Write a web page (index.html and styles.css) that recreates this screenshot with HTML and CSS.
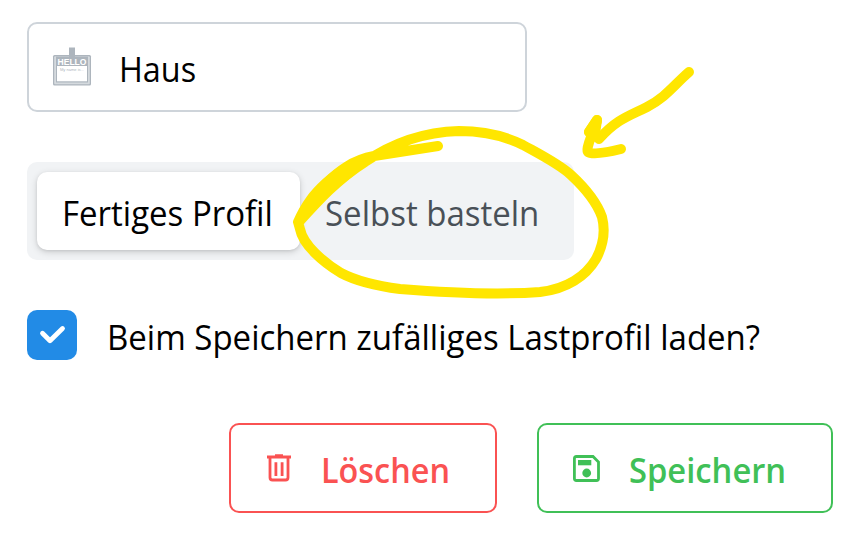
FILE: index.html
```html
<!DOCTYPE html>
<html lang="de">
<head>
<meta charset="utf-8">
<title>Lastprofil</title>
<link rel="stylesheet" href="styles.css">
</head>
<body>
<main class="form">
  <div class="field">
    <svg class="badge-icon" viewBox="0 0 40 40" aria-hidden="true">
      <rect x="1" y="8" width="38" height="30.5" rx="1.5" fill="#adb5bd"/>
      <rect x="2.2" y="9.2" width="35.6" height="28.1" rx="1" fill="#d5dade"/>
      <rect x="4" y="9.5" width="32" height="26" fill="#adb5bd"/>
      <rect x="5" y="19" width="30" height="15.3" fill="#fff"/>
      <rect x="17" y="0.5" width="6" height="10" fill="#adb5bd"/>
      <text class="hello" x="5.5" y="17.5" textLength="29" lengthAdjust="spacingAndGlyphs">HELLO</text>
      <text class="name-is" x="8" y="24" textLength="24" lengthAdjust="spacingAndGlyphs">My name is...</text>
    </svg>
    <span class="label label-haus">Haus</span>
  </div>
  <div class="segments">
    <div class="segment active"><span class="label label-fertig">Fertiges Profil</span></div>
    <div class="segment"><span class="label label-selbst">Selbst basteln</span></div>
  </div>
  <div class="check-row">
    <span class="checkbox">
      <svg viewBox="0 0 50 50" aria-hidden="true"><path d="M15.5 23.3 L23 30.7 L35.5 18.5"/></svg>
    </span>
    <span class="label label-check">Beim Speichern zufälliges Lastprofil laden?</span>
  </div>
  <div class="actions">
    <div class="button delete">
      <svg class="icon" viewBox="0 0 28 28" aria-hidden="true">
        <path d="M4 3.3V23.5Q4 26 6.5 26H19.5Q22 26 22 23.5V3.3M1 3H25M9 1.7H17M9.9 8.2V22M16.1 8.2V22"/>
      </svg>
      <span class="label label-delete">Löschen</span>
    </div>
    <div class="button save">
      <svg class="icon" viewBox="0 0 28 28" aria-hidden="true">
        <path d="M3.4 2.5H20L25.5 8V24.5Q25.5 26.5 23.5 26.5H3.4Q1.4 26.5 1.4 24.5V4.5Q1.4 2.5 3.4 2.5Z"/>
        <path class="solid" d="M5 6H18.3V11.3H5Z"/><circle class="solid" cx="13.7" cy="19" r="4.4"/>
      </svg>
      <span class="label label-save">Speichern</span>
    </div>
  </div>
</main>
<svg class="marker" viewBox="0 0 852 547" aria-hidden="true">
  <path d="M438 146L374 156C352 160 338 172 326 183C314 194 306 204 298 222L300 229C303 245 323 262 341 273C358 282 377 286 400 289C450 293 500 295 540 292C567 289 586 276 596 259C604 244 605 229 602 217C597 203 584 187 571 175C559 164 541 155 523 145C503 135 483 131 459 131C424 132 391 144 365 162C338 179 318 201 299 222"/>
  <path class="filled" d="M366 159C351 163 334 175 323 187L304 211L332 186Z"/>
  <path d="M689 72C673 86 666 97 647 107C629 116 617 119 599 139M597 120L589 132M597 121L591 137Q586 150 588 152Q593 156 621 149"/>
  <path class="filled" d="M597 120L589 132L595 134Z"/>
</svg>
</body>
</html>
```

FILE: styles.css
```css
* { box-sizing: border-box; }
body {
  margin: 0;
  background: #fff;
  color: #000;
  font: 35px/50px "Open Sans", "Noto Sans", sans-serif;
  overflow: hidden;
}
.form { width: 852px; height: 547px; padding: 22px 19px 0 27px; }
.label { display: inline-block; padding-top: 3px; white-space: nowrap; transform: scaleX(.943); transform-origin: 0 50%; flex: none; }
.label-haus { padding-top: 4px; transform: scaleX(.925); }
.label-delete { padding-top: 4px; transform: scaleX(.925); }
.label-save { padding-top: 4px; transform: scaleX(.935); }
.field {
  display: flex;
  align-items: center;
  width: 500px;
  height: 90px;
  padding-left: 23px;
  border: 2px solid #ced4da;
  border-radius: 10px;
}
.badge-icon { width: 40px; height: 40px; flex: none; margin-right: 27px; }
.hello { font: bold 9px "Liberation Sans", sans-serif; fill: #fff; }
.name-is { font: 4px "Liberation Sans", sans-serif; fill: #adb5bd; }
.segments {
  display: flex;
  width: 547px;
  height: 98px;
  margin-top: 50px;
  padding: 10px;
  border-radius: 10px;
  background: #f1f3f5;
}
.segment {
  display: flex;
  align-items: center;
  width: 263px;
  height: 78px;
  padding-left: 25px;
  border-radius: 10px;
  color: #495057;
}
.segment.active {
  background: #fff;
  color: #000;
  box-shadow: 0 2px 7px rgba(0, 0, 0, .16), 0 1px 3px rgba(0, 0, 0, .08);
}
.check-row { display: flex; align-items: center; height: 50px; margin-top: 50px; }
.checkbox { width: 50px; height: 50px; margin-right: 30px; border-radius: 10px; background: #228be6; flex: none; }
.checkbox svg { display: block; }
.checkbox path { fill: none; stroke: #fff; stroke-width: 4.8; stroke-linecap: round; stroke-linejoin: round; }
.actions { display: flex; justify-content: flex-end; gap: 40px; margin-top: 63px; }
.button {
  display: flex;
  align-items: center;
  height: 90px;
  padding-left: 34px;
  border: 2px solid;
  border-radius: 10px;
  font-weight: 600;
}
.delete { width: 268px; color: #fa5252; padding-left: 35px; }
.save { width: 296px; color: #40c057; }
.icon { width: 28px; height: 28px; margin: 0 28px 0 0; fill: none; stroke: currentColor; stroke-width: 2.8; flex: none; }
.delete .icon { margin-right: 27px; }
.solid { fill: currentColor; stroke: none; }
.marker { position: absolute; left: 0; top: 0; width: 852px; height: 547px; pointer-events: none; fill: none; stroke: #ffe600; stroke-width: 10; stroke-linecap: round; stroke-linejoin: round; }
.marker .filled { fill: #ffe600; }
```
